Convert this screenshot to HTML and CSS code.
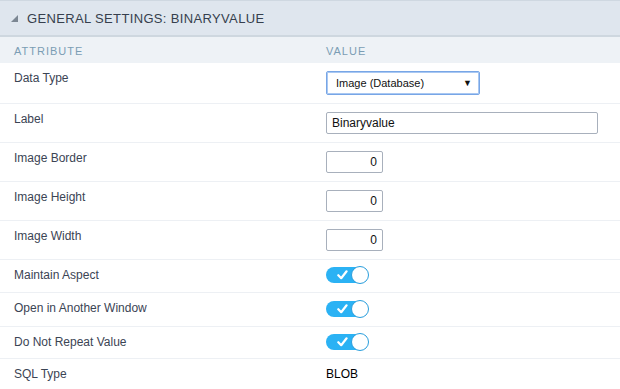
FILE: index.html
```html
<!DOCTYPE html>
<html>
<head>
<meta charset="utf-8">
<link rel="stylesheet" href="styles.css">
</head>
<body>
<div class="panel">
  <div class="panel-head">
    <span class="caret"></span>
    <span class="panel-title">General Settings: Binaryvalue</span>
  </div>
  <div class="cols">
    <div class="col-attr">Attribute</div>
    <div class="col-val">Value</div>
  </div>
  <div class="row r1">
    <div class="attr">Data Type</div>
    <div class="val"><div class="select"><span>Image (Database)</span><span class="arrow">▼</span></div></div>
  </div>
  <div class="row r2">
    <div class="attr">Label</div>
    <div class="val"><div class="input wide">Binaryvalue</div></div>
  </div>
  <div class="row r2">
    <div class="attr">Image Border</div>
    <div class="val"><div class="input num">0</div></div>
  </div>
  <div class="row r2">
    <div class="attr">Image Height</div>
    <div class="val"><div class="input num">0</div></div>
  </div>
  <div class="row r2">
    <div class="attr">Image Width</div>
    <div class="val"><div class="input num">0</div></div>
  </div>
  <div class="row r6">
    <div class="attr">Maintain Aspect</div>
    <div class="val tv"><div class="toggle"><svg class="check" width="11" height="10" viewBox="0 0 11 10"><path d="M1.3 5.2 L4.2 8.2 L9.6 1.3" fill="none" stroke="#fff" stroke-width="2.2" stroke-linecap="round" stroke-linejoin="round"/></svg><span class="knob"></span></div></div>
  </div>
  <div class="row r7">
    <div class="attr">Open in Another Window</div>
    <div class="val tv"><div class="toggle"><svg class="check" width="11" height="10" viewBox="0 0 11 10"><path d="M1.3 5.2 L4.2 8.2 L9.6 1.3" fill="none" stroke="#fff" stroke-width="2.2" stroke-linecap="round" stroke-linejoin="round"/></svg><span class="knob"></span></div></div>
  </div>
  <div class="row r8">
    <div class="attr">Do Not Repeat Value</div>
    <div class="val tv"><div class="toggle"><svg class="check" width="11" height="10" viewBox="0 0 11 10"><path d="M1.3 5.2 L4.2 8.2 L9.6 1.3" fill="none" stroke="#fff" stroke-width="2.2" stroke-linecap="round" stroke-linejoin="round"/></svg><span class="knob"></span></div></div>
  </div>
  <div class="row r9">
    <div class="attr">SQL Type</div>
    <div class="val text">BLOB</div>
  </div>
</div>
</body>
</html>
```
FILE: styles.css
```css
* { box-sizing: border-box; }
html, body { margin: 0; padding: 0; background: #fff; }
body { font-family: "Liberation Sans", Arial, sans-serif; width: 620px; height: 389px; overflow: hidden; }

.panel { width: 620px; }

.panel-head {
  height: 37px;
  background: #dfe6ee;
  border-top: 1px solid #cfd8e1;
  border-bottom: 2px solid #ced7df;
  display: flex;
  align-items: center;
  padding-left: 11px;
}
.caret {
  width: 0; height: 0;
  border-left: 7px solid transparent;
  border-bottom: 7px solid #7c8793;
  margin-right: 9px;
  margin-top: 1px;
}
.panel-title {
  font-size: 13px;
  text-transform: uppercase;
  letter-spacing: 0.35px;
  color: #363f4d;
}

.cols {
  height: 26px;
  background: #eef2f6;
  display: grid;
  grid-template-columns: 312px 1fr;
  align-items: center;
  font-size: 11px;
  letter-spacing: 1px;
  text-transform: uppercase;
  color: #7b9db4;
}
.col-attr { padding-left: 14px; padding-top: 1px; }
.col-val { padding-left: 14px; padding-top: 1px; }

.row {
  display: grid;
  grid-template-columns: 312px 1fr;
  align-items: start;
  border-bottom: 1px solid #edf0f4;
}
.r1 { height: 41px; }
.r2 { height: 39px; }
.r6 { height: 33px; }
.r7 { height: 34px; }
.r8 { height: 32px; }
.r9 { height: 31px; border-bottom: none; }

.attr {
  padding-left: 14px;
  padding-top: 5px;
  font-size: 12px;
  line-height: 20px;
  color: #3b4454;
}
.val { padding-left: 14px; padding-top: 8px; }
.tv { padding-top: 7px; }
.r7 .tv { padding-top: 8px; }
.r8 .tv { padding-top: 7px; }
.val.text { padding-top: 5px; font-size: 12px; line-height: 20px; color: #000; }

.select {
  width: 154px;
  height: 24px;
  border: 1px solid #78a6e6;
  box-shadow: 0 0 0 1px #a9c8f2 inset;
  border-radius: 2px;
  display: flex;
  align-items: center;
  justify-content: space-between;
  padding: 0 7px 0 9px;
  font-size: 11px;
  color: #111;
  background: #fff;
}
.arrow { font-size: 9px; color: #111; }

.input {
  height: 22px;
  border: 1px solid #a8b0bc;
  border-radius: 2px;
  font-size: 12px;
  line-height: 20px;
  color: #111;
  background: #fff;
}
.wide { width: 272px; padding-left: 5px; }
.num { width: 57px; text-align: right; padding-right: 5px; }

.toggle {
  position: relative;
  width: 42px;
  height: 16px;
  border-radius: 8px;
  background: #2bb2f4;
}
.check { position: absolute; left: 11px; top: 3px; }
.knob {
  position: absolute;
  right: -1px;
  top: -1px;
  width: 18px;
  height: 18px;
  border-radius: 50%;
  background: #fff;
  border: 1px solid #2a9edc;
}
```
